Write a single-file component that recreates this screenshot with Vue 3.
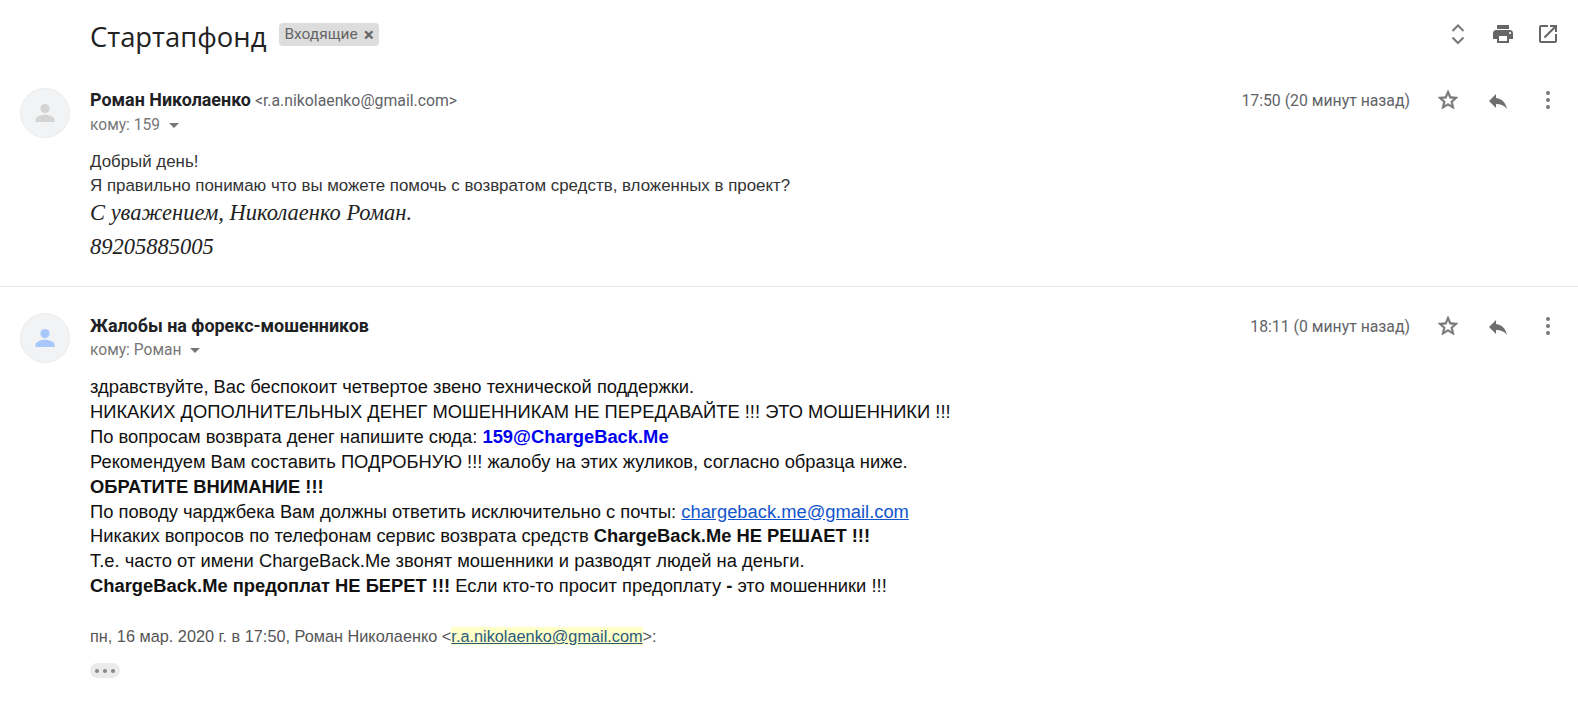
<template>
  <div class="thread">
    <div class="thread-head">
      <div class="subject">
        <span class="subject-text">Стартапфонд</span>
        <span class="label">Входящие<b class="label-x">×</b></span>
      </div>
      <div class="thread-tools">
        <svg class="tool" viewBox="0 0 24 24" fill="none" stroke="#777" stroke-width="2"><path d="M6.5 9 12 3.5 17.5 9M6.5 15.5 12 21 17.5 15.5"/></svg>
        <svg class="tool" viewBox="0 0 24 24" fill="#666"><path d="M19 8H5c-1.66 0-3 1.34-3 3v6h4v4h12v-4h4v-6c0-1.66-1.34-3-3-3zm-3 11H8v-5h8v5zm3-7c-.55 0-1-.45-1-1s.45-1 1-1 1 .45 1 1-.45 1-1 1zm-1-9H6v4h12V3z"/></svg>
        <svg class="tool" viewBox="0 0 24 24" fill="#666"><path d="M19 19H5V5h7V3H5a2 2 0 0 0-2 2v14a2 2 0 0 0 2 2h14a2 2 0 0 0 2-2v-7h-2v7zM14 3v2h3.59l-9.83 9.83 1.41 1.41L19 6.41V10h2V3h-7z"/></svg>
      </div>
    </div>

    <section class="message first">
      <div class="avatar">
        <svg viewBox="0 0 24 24" fill="#d4d4d4"><circle cx="12" cy="7.6" r="4.6"/><path d="M2.5 21v-2.4c0-3.2 6.3-4.8 9.5-4.8s9.5 1.6 9.5 4.8V21z"/></svg>
      </div>
      <div class="message-main">
        <div class="message-head">
          <div class="sender">
            <div class="from"><span class="name">Роман Николаенко</span> <span class="email">&lt;r.a.nikolaenko@gmail.com&gt;</span></div>
            <div class="to">кому: 159 <i class="caret"></i></div>
          </div>
          <div class="meta">
            <span class="time">17:50 (20 минут назад)</span>
            <svg class="star" viewBox="0 0 24 24" fill="#777" stroke="#777" stroke-width=".6"><path d="M22 9.24l-7.19-.62L12 2 9.19 8.63 2 9.24l5.46 4.73L5.82 21 12 17.27 18.18 21l-1.63-7.03L22 9.24zM12 15.4l-3.76 2.27 1-4.28-3.32-2.88 4.38-.38L12 6.1l1.71 4.04 4.38.38-3.32 2.88 1 4.28L12 15.4z"/></svg>
            <svg class="reply" viewBox="0 0 24 24" fill="#6e6e6e"><path d="M10 9V5l-7 7 7 7v-4.1c5 0 8.5 1.6 11 5.1-1-5-4-10-11-11z"/></svg>
            <svg class="more" viewBox="0 0 24 24" fill="#777"><circle cx="12" cy="5" r="2"/><circle cx="12" cy="12" r="2"/><circle cx="12" cy="19" r="2"/></svg>
          </div>
        </div>
        <div class="short-body">
          <div>Добрый день!</div>
          <div>Я правильно понимаю что вы можете помочь с возвратом средств, вложенных в проект?</div>
        </div>
        <div class="signature">
          <div>С уважением, Николаенко Роман.</div>
          <div>89205885005</div>
        </div>
      </div>
    </section>

    <section class="message second">
      <div class="avatar">
        <svg viewBox="0 0 24 24" fill="#a8c7fa"><circle cx="12" cy="7.6" r="4.6"/><path d="M2.5 21v-2.4c0-3.2 6.3-4.8 9.5-4.8s9.5 1.6 9.5 4.8V21z"/></svg>
      </div>
      <div class="message-main">
        <div class="message-head">
          <div class="sender">
            <div class="from"><span class="name">Жалобы на форекс-мошенников</span></div>
            <div class="to">кому: Роман <i class="caret"></i></div>
          </div>
          <div class="meta">
            <span class="time">18:11 (0 минут назад)</span>
            <svg class="star" viewBox="0 0 24 24" fill="#777" stroke="#777" stroke-width=".6"><path d="M22 9.24l-7.19-.62L12 2 9.19 8.63 2 9.24l5.46 4.73L5.82 21 12 17.27 18.18 21l-1.63-7.03L22 9.24zM12 15.4l-3.76 2.27 1-4.28-3.32-2.88 4.38-.38L12 6.1l1.71 4.04 4.38.38-3.32 2.88 1 4.28L12 15.4z"/></svg>
            <svg class="reply" viewBox="0 0 24 24" fill="#6e6e6e"><path d="M10 9V5l-7 7 7 7v-4.1c5 0 8.5 1.6 11 5.1-1-5-4-10-11-11z"/></svg>
            <svg class="more" viewBox="0 0 24 24" fill="#777"><circle cx="12" cy="5" r="2"/><circle cx="12" cy="12" r="2"/><circle cx="12" cy="19" r="2"/></svg>
          </div>
        </div>
        <div class="long-body">
          <div>здравствуйте, Вас беспокоит четвертое звено технической поддержки.</div>
          <div>НИКАКИХ ДОПОЛНИТЕЛЬНЫХ ДЕНЕГ МОШЕННИКАМ НЕ ПЕРЕДАВАЙТЕ !!! ЭТО МОШЕННИКИ !!!</div>
          <div>По вопросам возврата денег напишите сюда: <b class="blue">159@ChargeBack.Me</b></div>
          <div>Рекомендуем Вам составить ПОДРОБНУЮ !!! жалобу на этих жуликов, согласно образца ниже.</div>
          <div><b>ОБРАТИТЕ ВНИМАНИЕ !!!</b></div>
          <div>По поводу чарджбека Вам должны ответить исключительно с почты: <a class="link">chargeback.me@gmail.com</a></div>
          <div>Никаких вопросов по телефонам сервис возврата средств <b>ChargeBack.Me НЕ РЕШАЕТ !!!</b></div>
          <div>Т.е. часто от имени ChargeBack.Me звонят мошенники и разводят людей на деньги.</div>
          <div><b>ChargeBack.Me предоплат НЕ БЕРЕТ !!!</b> Если кто-то просит предоплату <b>-</b> это мошенники !!!</div>
        </div>
        <div class="quote-line">пн, 16 мар. 2020 г. в 17:50, Роман Николаенко &lt;<a class="quote-link">r.a.nikolaenko@gmail.com</a>&gt;:</div>
        <div class="dots"><i></i><i></i><i></i></div>
      </div>
    </section>
  </div>
</template>

<script setup>
</script>

<style>
html, body {
  background: #fff;
  overflow: hidden;
}
</style>

<style scoped>
.thread {
  height: 701px;
  overflow: hidden;
  font-family: Roboto, "Noto Sans", sans-serif;
  color: #222;
}

.thread-head {
  display: flex;
  justify-content: space-between;
  align-items: center;
  height: 72px;
  padding: 0 18px 0 90px;
}

.subject {
  display: flex;
  align-items: center;
  gap: 13px;
}

.subject-text {
  font-family: "Open Sans", sans-serif;
  font-size: 27.4px;
  color: #222;
}

.label {
  display: flex;
  align-items: center;
  background: #ddd;
  color: #666;
  font-size: 15.5px;
  border-radius: 4px;
  padding: 2px 5px;
  line-height: 19px;
  margin-top: -4px;
}

.label-x {
  font-size: 19px;
  margin-left: 6px;
}

.thread-tools {
  display: flex;
  gap: 21px;
  margin-top: -4px;
}

.tool {
  width: 24px;
  height: 24px;
}

.message {
  display: flex;
  padding: 16px 0 0 20px;
}

.first {
  height: 198px;
  border-bottom: 1px solid #e8e8e8;
}

.second {
  padding-top: 26px;
}

.second .message-head {
  margin-top: 1px;
}

.first .from {
  height: 25px;
}

.avatar {
  width: 50px;
  height: 50px;
  flex: none;
  border-radius: 50%;
  background: #f1f3f4;
  border: 1px solid #ececec;
  box-sizing: border-box;
  display: flex;
  align-items: center;
  justify-content: center;
  margin-right: 20px;
}

.avatar svg {
  width: 24px;
  height: 24px;
}

.message-main {
  flex: 1;
}

.message-head {
  display: flex;
  justify-content: space-between;
  height: 50px;
}

.sender {
  line-height: 24px;
}

.from {
  height: 24px;
}

.name {
  font-size: 17.9px;
  font-weight: 700;
  color: #202124;
}

.email {
  font-size: 15.8px;
  color: #5f6368;
}

.to {
  font-size: 15.6px;
  color: #777;
}

.caret {
  display: inline-block;
  margin-left: 5px;
  vertical-align: middle;
  border: 5px solid transparent;
  border-top-color: #777;
  border-bottom-width: 0;
}

.meta {
  display: flex;
  align-items: center;
  height: 24px;
  padding-right: 18px;
}

.time {
  font-size: 15.8px;
  color: #5f6368;
  margin-right: 26px;
}

.star,
.reply,
.more {
  width: 24px;
  height: 24px;
}

.reply {
  margin-left: 26px;
  margin-top: 2px;
}

.more {
  margin-left: 26px;
}

.short-body {
  font-family: "Liberation Sans", Arial, sans-serif;
  font-size: 16.9px;
  line-height: 24px;
  color: #333;
  margin-top: 12px;
}

.signature {
  font-family: "Liberation Serif", serif;
  font-style: italic;
  font-size: 22.5px;
  line-height: 33.5px;
  color: #222;
  margin-top: -2px;
}

.long-body {
  font-family: "Liberation Sans", Arial, sans-serif;
  font-size: 18.35px;
  line-height: 24.9px;
  color: #111;
  margin-top: 11px;
}

.blue {
  color: #0000ee;
}

.link {
  color: #1155cc;
  text-decoration: underline;
}

.quote-line {
  font-family: "Liberation Sans", Arial, sans-serif;
  font-size: 16.3px;
  color: #555;
  margin-top: 27px;
  line-height: 20px;
}

.quote-link {
  color: #2a5a80;
  text-decoration: underline;
  background: #ffffc8;
}

.dots {
  display: flex;
  align-items: center;
  justify-content: center;
  gap: 4px;
  width: 30px;
  height: 15px;
  margin-top: 17px;
  border-radius: 8px;
  background: #ebebeb;
}

.dots i {
  width: 4px;
  height: 4px;
  border-radius: 50%;
  background: #888;
}
</style>
